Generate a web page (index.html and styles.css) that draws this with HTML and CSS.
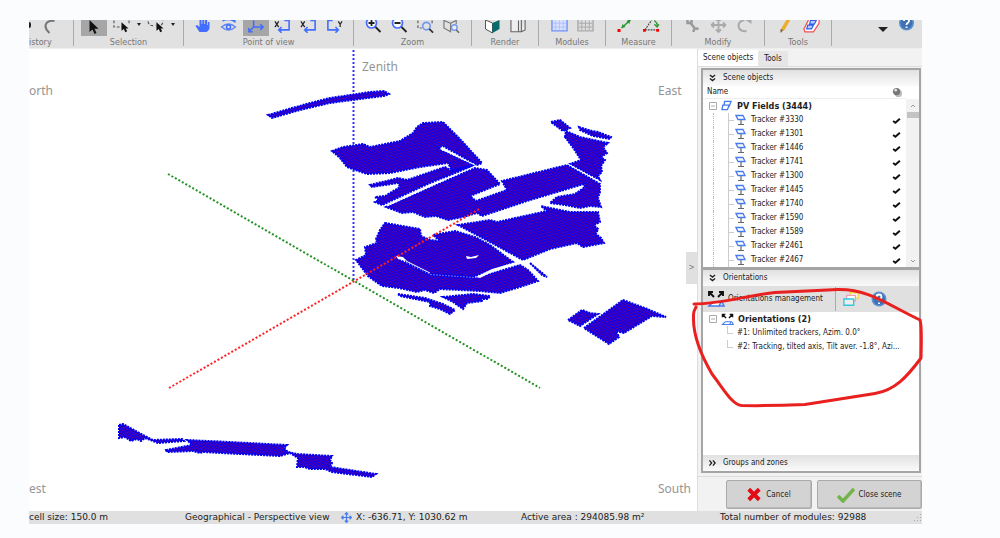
FILE: index.html
```html
<!DOCTYPE html>
<html lang="en">
<head>
<meta charset="utf-8">
<title>Scene editor</title>
<link rel="stylesheet" href="styles.css">
</head>
<body>
<svg class="defs" aria-hidden="true">
  <symbol id="tracker" viewBox="0 0 12 12"><path d="M1 1.500h7l2 4H3z" fill="#fff" stroke="#477bed" stroke-width="1.300"/><path d="M6 6v4M3 10.500h6" stroke="#666" stroke-width="1.200"/></symbol>
  <symbol id="tick" viewBox="0 0 8 8"><path d="M1 4.500l2 1.500 4-3.500" fill="none" stroke="#111" stroke-width="1.800"/></symbol>
  <symbol id="minus" viewBox="0 0 8 8"><path d="M.5.5h7v7h-7zM2 4h4" fill="#fff" stroke="#aaa"/></symbol>
  <symbol id="down" viewBox="0 0 8 8"><path d="M1 .5l3 2.500 3-2.500M1 4.500l3 2.500 3-2.500" fill="none" stroke="#222" stroke-width="1.500"/></symbol>
  <symbol id="orient" viewBox="0 0 18 18"><path d="M6 12h8l-2 4H2z" fill="#fff" stroke="#477bed" stroke-width="1.500"/><path d="M12 16h5l-2-4" fill="none" stroke="#477bed" stroke-width="1.500"/><path d="M7 7L2 2M2 6V2h4M11 7l5-5M12 2h4v4" fill="none" stroke="#111" stroke-width="1.900"/></symbol>
  <symbol id="help" viewBox="0 0 16 16"><circle cx="8" cy="8" r="7.500" fill="#5d92cf"/><circle cx="8" cy="8" r="6" fill="#3e72b5"/><path d="M5.500 6q0-2.500 2.500-2.500T10.500 6q0 1.200-1.300 1.900Q8 8.500 8 10M8 11.500v1.500" fill="none" stroke="#fff" stroke-width="1.800"/></symbol>
  <symbol id="move" viewBox="0 0 16 16"><path d="M8 1v14M1 8h14M5.500 3.500L8 1l2.500 2.500M5.500 12.500L8 15l2.500-2.500M3.500 5.500L1 8l2.500 2.500M12.500 5.500L15 8l-2.500 2.500" fill="none" stroke="currentColor" stroke-width="1.800"/></symbol>
  <symbol id="cursor" viewBox="0 0 16 16"><path d="M4 0v12l3-2.500 2 4.500 2-1-2-4.200h4z" fill="#111"/></symbol>
</svg>
<div class="app">
  <header class="toolbar">
    <section class="group history"><div class="icons"><i class="undo-end"></i><button class="tool" aria-label="Redo"><svg viewBox="0 0 16 16"><path d="M9 13Q3 8 6 3q3-3 8-2" fill="none" stroke="#777" stroke-width="2"/></svg></button></div><span class="caption">istory</span></section>
    <section class="group selection"><div class="icons">
      <button class="tool active" aria-label="Select"><svg viewBox="0 0 16 16"><use href="#cursor"/></svg></button>
      <button class="tool" aria-label="Select rectangle"><svg viewBox="0 0 18 16"><path d="M1 0v7h9M17 0v5" fill="none" stroke="#555" stroke-width="1.200" stroke-dasharray="3 2"/><path d="M9 2v9l2.500-2 1.500 3.500 2-1-1.500-3h3z" fill="#111"/></svg></button>
      <i class="caret"></i>
      <button class="tool" aria-label="Select lasso"><svg viewBox="0 0 18 16"><path d="M1 1q1 6 8 4M15 5q2-2 2-5" fill="none" stroke="#555" stroke-width="1.200" stroke-dasharray="3 2"/><path d="M10 2v9l2.500-2 1.500 3.500 2-1-1.500-3h3z" fill="#111"/></svg></button>
      <i class="caret"></i></div><span class="caption">Selection</span></section>
    <section class="group view"><div class="icons">
      <button class="tool" aria-label="Pan"><svg viewBox="0 0 16 16"><path d="M5 12L1 6l1.500-1L5 7V-1h2v5h.8V-2h2v6h.8V-1h2v6h.7V2H15v6q-1 4-4 4z" fill="#426dff"/></svg></button>
      <button class="tool" aria-label="Orbit"><svg viewBox="0 0 16 16"><path d="M1 7q7-6 14 0-7 6-14 0z" fill="none" stroke="#5c86f5" stroke-width="1.300"/><circle cx="8" cy="7" r="2" fill="none" stroke="#426dff" stroke-width="1.500"/><path d="M2 1q5-3 12 0" fill="none" stroke="#426dff" stroke-width="1.300"/><path d="M10 0h5v3z" fill="#426dff"/></svg></button>
      <button class="tool active" aria-label="Perspective"><svg viewBox="0 0 18 16"><path d="M7 0v7h10M14 4l3 3-3 3M7 7l-5 5M2 8v4h4" fill="none" stroke="#426dff" stroke-width="1.700"/></svg></button>
      <button class="tool" aria-label="Front view"><svg viewBox="0 0 18 16"><path d="M1 1l4 6M5 1L1 7" stroke="#222" stroke-width="1.300"/><path d="M11 0h5v10H5M8 7l-3 3 3 3" fill="none" stroke="#426dff" stroke-width="1.700"/></svg></button>
      <button class="tool" aria-label="Side view"><svg viewBox="0 0 18 16"><path d="M1 1l4 6M5 1L1 7" stroke="#222" stroke-width="1.300"/><path d="M11 0h5v10H5M8 7l-3 3 3 3" fill="none" stroke="#426dff" stroke-width="1.700"/></svg></button>
      <button class="tool" aria-label="Top view"><svg viewBox="0 0 18 16"><path d="M13 1l2 3 2-3M15 4v3" fill="none" stroke="#222" stroke-width="1.300"/><path d="M7 0H2v10h11M10 7l3 3-3 3" fill="none" stroke="#426dff" stroke-width="1.700"/></svg></button>
    </div><span class="caption">Point of view</span></section>
    <section class="group zoom"><div class="icons">
      <button class="tool" aria-label="Zoom in"><svg viewBox="0 0 16 16"><circle cx="6" cy="3" r="5" fill="#fff" stroke="#426dff" stroke-width="1.700"/><path d="M3 3h6M6 0v6M10 7l5 5" stroke="#222" stroke-width="1.800"/></svg></button>
      <button class="tool" aria-label="Zoom out"><svg viewBox="0 0 16 16"><circle cx="6" cy="3" r="5" fill="#fff" stroke="#426dff" stroke-width="1.700"/><path d="M3 3h6M10 7l5 5" stroke="#222" stroke-width="1.800"/></svg></button>
      <button class="tool" aria-label="Zoom window"><svg viewBox="0 0 18 16"><path d="M1 0v8h4M16 0v5" fill="none" stroke="#555" stroke-width="1.200" stroke-dasharray="3 2"/><circle cx="10" cy="6" r="4" fill="none" stroke="#7296f2" stroke-width="1.700"/><path d="M13 9l4 4" stroke="#333" stroke-width="1.800"/></svg></button>
      <button class="tool" aria-label="Zoom all"><svg viewBox="0 0 18 16"><path d="M1 0l7 3v9l-7-4zM8 3l6-3v4" fill="none" stroke="#777" stroke-width="1.200"/><circle cx="12" cy="7.500" r="3" fill="#eee" stroke="#7296f2" stroke-width="1.500"/><path d="M14 10l3 3" stroke="#666" stroke-width="1.500"/></svg></button>
    </div><span class="caption">Zoom</span></section>
    <section class="group render"><div class="icons">
      <button class="tool" aria-label="Shaded"><svg viewBox="0 0 16 16"><path d="M1 0l7 3v10l-7-4z" fill="#fff" stroke="#555"/><path d="M8 3l7-3v9l-7 4z" fill="#086b6b"/></svg></button>
      <button class="tool" aria-label="Wireframe"><svg viewBox="0 0 18 16"><path d="M1-1v13h11V-1M12 12l4-2V-1M9 0v12" fill="#eee" stroke="#666" stroke-width="1.200"/></svg></button>
    </div><span class="caption">Render</span></section>
    <section class="group modules"><div class="icons">
      <button class="tool" aria-label="Modules"><svg viewBox="0 0 18 16"><path d="M1-2h16v13H1z" fill="#d8e1ff" stroke="#6f92ff" stroke-width="1.500"/><path d="M5 0v10M9 0v10M13 0v10M2 3h14M2 7h14" stroke="#afc2ff"/></svg></button>
      <button class="tool" aria-label="Strings"><svg viewBox="0 0 18 16"><path d="M1-2h16v13H1z" fill="#ddd" stroke="#aaa" stroke-width="1.500"/><path d="M5 0v10M9 0v10M13 0v10M2 3h14M2 7h14" stroke="#aaa"/></svg></button>
    </div><span class="caption">Modules</span></section>
    <section class="group measure"><div class="icons">
      <button class="tool" aria-label="Distance"><svg viewBox="0 0 16 16"><path d="M4 8l9-8" fill="none" stroke="#2a972f" stroke-width="1.500"/><path d="M4 8l1-4 3 3zM13-1l-1 5-3-3z" fill="#2a972f"/><path d="M0 9h3v3H0z" fill="red"/></svg></button>
      <button class="tool" aria-label="Angle"><svg viewBox="0 0 18 16"><path d="M2 10L9 0M2 10h13" stroke="#444" stroke-width="1.200" stroke-dasharray="2 1"/><path d="M12 0q4 3 3 7M12 4l3 3 2-3" fill="none" stroke="#2a972f" stroke-width="1.300"/><path d="M0 9h3v3H0zM14 9h3v3h-3z" fill="red"/></svg></button>
    </div><span class="caption">Measure</span></section>
    <section class="group modify"><div class="icons">
      <button class="tool" aria-label="Settings"><svg viewBox="0 0 16 16"><path d="M3 0v3h4V0M6 3l4 5M9 12q0-5 5-3" fill="none" stroke="#999" stroke-width="2.500"/></svg></button>
      <button class="tool muted" aria-label="Move"><svg viewBox="0 3 16 16"><use href="#move" width="16" height="16"/></svg></button>
      <button class="tool" aria-label="Rotate"><svg viewBox="0 0 16 16"><path d="M10 11Q3 12 2 6q0-5 6-6" fill="none" stroke="#aaa" stroke-width="2"/><path d="M9 0h6v4z" fill="#aaa"/></svg></button>
    </div><span class="caption">Modify</span></section>
    <section class="group tools"><div class="icons">
      <button class="tool" aria-label="Edit"><svg viewBox="0 0 16 16"><path d="M4 8l6-10h4L7 10l-4 2z" fill="#edae2e"/><path d="M3 9l3 1-3 3z" fill="#765"/></svg></button>
      <button class="tool" aria-label="Zones"><svg viewBox="0 0 18 16"><path d="M6-1L1 9l1 3h9l6-9v-4z" fill="#fff" stroke="#f15050" stroke-width="1.300"/><path d="M8 0h6l-2 4H7zM5 5h6l-2 4H4z" fill="#b9cbff" stroke="#315ee3" stroke-width="1.300"/></svg></button>
    </div><span class="caption">Tools</span></section>
    <div class="toolbar-end"><i class="caret large"></i><button class="tool" aria-label="Help"><svg viewBox="0 5 16 16"><use href="#help" width="16" height="16"/></svg></button></div>
  </header>

  <div class="workspace">
    <main class="viewport">
      <svg class="scene" viewBox="29 49 668 462" preserveAspectRatio="xMidYMid meet" role="img" aria-label="Perspective view of the fields">
        <defs><pattern id="rows" width="4" height="3" patternUnits="userSpaceOnUse" patternTransform="rotate(-12)"><path d="M0 0h4v3H0z" fill="#0800f4"/><path d="M0 1h2M2 2.500h2" stroke="#780078" stroke-width="1"/></pattern></defs>
        <path class="axis up" d="M353.500 50V281"/>
        <path class="axis green" d="M168 174L540 388"/>
        <g class="field">
          <path d="M268 115L285 110 310 103 330 98 350 95 370 92 384 91 389 94 384 96 360 99 330 103 300 110 272 118z"/>
          <path d="M332 151L343 147 363 144 370 147 400 141 413 133 417 127 423 123 443 122 460 139 482 163 477 165 443 146 439 147 440 150 445 152 473 165 452 171 448 163 420 167 390 173 367 174 347 167 340 158z"/>
          <path d="M370 185L398 178 407 180 445 167 452 171 473 166 430 183 382 205 375 202 379 200 375 197 385 196 400 187 398 183 372 187z"/>
          <path d="M386 207L475 168 487 170 500 184 470 196 476 201 507 190 502 181 567 165 600 184 600 192 598 198 601 207 590 206 580 208 565 205 550 203 557 197 575 194 585 187 584 184 527 201 482 216 477 213 463 217 448 220 436 216 425 217 413 212 402 213z"/>
          <path d="M565 137L566 131 580 137 608 143 603 147 607 153 601 157 605 160 601 166 602 172 598 176 600 180 570 164 581 160 574 149z"/>
          <path d="M551 122L560 120 570 128 563 131zM579 127L592 131 598 132 611 137 610 139 593 136 580 130z"/>
          <path d="M458 225L490 220 497 222 547 211 541 206 555 209 570 212 598 212 600 222 594 225 598 229 596 234 601 238 604 243 583 247 577 243 550 249 523 260 490 242z"/>
          <path d="M385 223L420 229 421 236 430 240 440 241 433 235 455 231 475 237 490 245 513 262 498 268 490 270 473 277 430 274 407 262 404 258 397 257 398 259 430 275 476 278 520 265 528 270 538 281 520 287 500 293 480 291 460 290 440 289 434 293 425 290 417 292 399 288 382 286 368 276 356 260 366 255 365 247 377 243 376 239 380 230z"/>
          <path d="M398 294L425 298 431 300 443 304 455 310 450 314 440 309 430 306 430 302 400 296zM443 297L473 294 490 296 488 299 477 299 483 301 467 303 463 309 453 302z"/>
          <path d="M530 263L547 277 542 275zM568 320L582 310 590 313 598 314 580 326zM584 328L623 300 645 308 666 317 652 316 624 333 616 331 619 337 609 344z"/>
          <path d="M119 425L123 424 145 436 153 440 182 439 184 441 158 443 145 438 141 441 137 439 131 441 125 437 119 438z"/>
          <path d="M166 450L192 445 187 440 230 442 287 445 284 448 288 452 297 454 332 456 330 460 332 463 330 467 376 474 372 477 332 472 325 469 310 469 304 467 297 467 298 458 290 453 280 456 240 454 203 452 200 453 193 451 167 452z"/>
        </g>
        <path class="gap" d="M396 256l7 1 4 4-9-2zM466 256l5 1 8-2-3 3-9 1zM476 277L492 269 513 263 510 266 490 273 480 278z"/>
        <path class="lane" d="M406 261L430 273M568 164L600 182M387 206L475 166M441 149L475 165"/>
        <path class="axis red" d="M169 388L481 208"/>
        <g class="compass"><text x="362" y="71">Zenith</text><text x="29" y="95">orth</text><text x="658" y="95">East</text><text x="29" y="493">est</text><text x="658" y="493">South</text></g>
      </svg>
      <button class="collapse" aria-label="Collapse panel">&gt;</button>
    </main>

    <aside class="sidebar">
      <nav class="tabs"><button class="tab selected">Scene objects</button><button class="tab">Tools</button></nav>
      <div class="panels">
        <section class="panel">
          <h2 class="panel-title"><svg><use href="#down"/></svg>Scene objects</h2>
          <div class="list">
            <table class="objects">
              <thead><tr><th>Name</th><th class="mark"><svg viewBox="0 0 12 12"><circle cx="7" cy="7" r="4" fill="#bbb"/><circle cx="5" cy="5" r="4" fill="#777"/><circle cx="4" cy="3.500" r="1.500" fill="#ddd"/></svg></th></tr></thead>
              <tbody>
                <tr><td><span class="root"><svg class="toggle"><use href="#minus"/></svg><svg class="fields" viewBox="0 0 12 12"><path d="M4 1h7L9 6H3z" fill="#fff" stroke="#477bed" stroke-width="1.400"/><path d="M2 5h7l-2 5H1z" fill="#fff" stroke="#477bed" stroke-width="1.400"/></svg>PV Fields (3444)</span></td><td></td></tr>
                <tr><td><span class="leaf"><svg><use href="#tracker"/></svg>Tracker #3330</span></td><td class="mark"><svg><use href="#tick"/></svg></td></tr>
                <tr><td><span class="leaf"><svg><use href="#tracker"/></svg>Tracker #1301</span></td><td class="mark"><svg><use href="#tick"/></svg></td></tr>
                <tr><td><span class="leaf"><svg><use href="#tracker"/></svg>Tracker #1446</span></td><td class="mark"><svg><use href="#tick"/></svg></td></tr>
                <tr><td><span class="leaf"><svg><use href="#tracker"/></svg>Tracker #1741</span></td><td class="mark"><svg><use href="#tick"/></svg></td></tr>
                <tr><td><span class="leaf"><svg><use href="#tracker"/></svg>Tracker #1300</span></td><td class="mark"><svg><use href="#tick"/></svg></td></tr>
                <tr><td><span class="leaf"><svg><use href="#tracker"/></svg>Tracker #1445</span></td><td class="mark"><svg><use href="#tick"/></svg></td></tr>
                <tr><td><span class="leaf"><svg><use href="#tracker"/></svg>Tracker #1740</span></td><td class="mark"><svg><use href="#tick"/></svg></td></tr>
                <tr><td><span class="leaf"><svg><use href="#tracker"/></svg>Tracker #1590</span></td><td class="mark"><svg><use href="#tick"/></svg></td></tr>
                <tr><td><span class="leaf"><svg><use href="#tracker"/></svg>Tracker #1589</span></td><td class="mark"><svg><use href="#tick"/></svg></td></tr>
                <tr><td><span class="leaf"><svg><use href="#tracker"/></svg>Tracker #2461</span></td><td class="mark"><svg><use href="#tick"/></svg></td></tr>
                <tr><td><span class="leaf"><svg><use href="#tracker"/></svg>Tracker #2467</span></td><td class="mark"><svg><use href="#tick"/></svg></td></tr>
              </tbody>
            </table>
            <div class="scrollbar"><svg viewBox="0 0 8 8"><path d="M2 5l2-2 2 2" fill="none" stroke="#999"/></svg><i class="thumb"></i><svg class="last" viewBox="0 0 8 8"><path d="M2 3l2 2 2-2" fill="none" stroke="#999"/></svg></div>
          </div>
        </section>
        <section class="panel grow">
          <h2 class="panel-title"><svg><use href="#down"/></svg>Orientations</h2>
          <div class="orient-bar"><button class="manage"><svg><use href="#orient"/></svg>Orientations management</button><button class="orient-tool" aria-label="Arrange"><svg viewBox="0 0 18 16"><path d="M8 1h9v6H8z" fill="#fff" stroke="#f4d63a" stroke-width="1.500"/><path d="M4 4h10v6H4z" fill="#fff" stroke="#f3a0b4" stroke-width="1.500"/><path d="M1 8h11v7H1z" fill="#eee" stroke="#2ec9dc" stroke-width="1.500"/></svg></button><button class="orient-tool" aria-label="Orientation help"><svg><use href="#help"/></svg></button></div>
          <ul class="orientations">
            <li class="root"><svg class="toggle"><use href="#minus"/></svg><svg class="orient-icon"><use href="#orient"/></svg>Orientations (2)</li>
            <li class="item">#1: Unlimited trackers, Azim. 0.0°</li>
            <li class="item">#2: Tracking, tilted axis, Tilt aver. -1.8°, Azi...</li>
          </ul>
          <h2 class="panel-title"><svg class="closed"><use href="#down"/></svg>Groups and zones</h2>
        </section>
      </div>
      <div class="actions">
        <button class="action"><svg viewBox="0 0 16 16"><path d="M2 2l12 12M14 2L2 14" stroke="#e30b13" stroke-width="4.500"/></svg>Cancel</button>
        <button class="action wide"><svg class="check" viewBox="0 0 18 16"><path d="M1 9l5 5L17 2" fill="none" stroke="#75b34b" stroke-width="3.500"/></svg>Close scene</button>
      </div>
      <svg class="annotation" viewBox="690 285 236 124" aria-hidden="true"><path d="M694 304C722 304 748 295 775 292.500Q805 291 838 289.500C869 289 888 305 920 320Q922 325 921 358C907 377 895 390 875 393.500Q847 398 805 404.500 770 406 742 405.500C732 405 723 388 712 374 698 350 693 333 693.500 317Q693 312 696 307"/></svg>
    </aside>
  </div>
  <footer class="status"><span class="cell first">cell size: 150.0 m</span><span class="cell mode">Geographical - Perspective view</span><span class="cell position"><svg><use href="#move"/></svg>X: -636.71, Y: 1030.62 m</span><span class="cell area">Active area : 294085.98 m²</span><span class="cell total">Total number of modules: 92988</span><svg class="grip" viewBox="0 0 8 8"><path d="M6 0h1v1H6zM3 3h1v1H3zM6 3h1v1H6zM0 6h1v1H0zM3 6h1v1H3zM6 6h1v1H6z" fill="#aaa"/></svg></footer>
</div>
</body>
</html>
```
FILE: styles.css
```css
* { box-sizing: border-box; }
body {
  margin: 0;
  min-height: 100vh;
  padding: 20px 78px 14px 29px;
  display: flex;
  background: #fbfcfd;
  color: #222;
  font: 8px/14px "DejaVu Sans Condensed", "Noto Sans", sans-serif;
}
button { font: inherit; color: inherit; border: 0; padding: 0; background: none; }
h2, ul { margin: 0; padding: 0; font: inherit; list-style: none; }
svg { display: block; flex: none; }
.defs { position: absolute; width: 0; height: 0; }
.app { flex: 1; min-width: 0; display: flex; flex-direction: column; background: #fff; }

.toolbar { display: flex; height: 29px; background: #e1e1e1; border-bottom: 1px solid #eee; overflow: hidden; }
.group { display: flex; flex-direction: column; align-items: center; border-right: 1px solid #aaa; margin-bottom: 2px; }
.icons { display: flex; height: 16px; gap: 2px; justify-content: center; }
.tool { width: 24px; height: 16px; display: flex; justify-content: center; overflow: hidden; }
.tool svg { width: 17px; height: 16px; }
.tool.active { width: 26px; background: #a6a6a6; }
.muted { color: #aaa; }
.caption { color: #777; font-size: 9px; line-height: 13px; }
.caret { margin-top: 3px; height: 0; border: 2px solid transparent; border-top: 3px solid #222; border-bottom: 0; }
.caret.large { margin-top: 7px; border-width: 5px 5px 0; }
.history { width: 45px; align-items: flex-start; }
.undo-end { width: 2px; height: 6px; margin-top: 2px; background: #222; border-radius: 0 2px 2px 0; }
.history .icons { gap: 5px; }
.selection { width: 110px; }
.selection .icons { gap: 3px; padding-right: 2px; }
.view { width: 170px; }
.zoom { width: 118px; }
.render, .modules { width: 67px; }
.measure { width: 66px; }
.modify { width: 93px; }
.tools { width: 67px; }
.toolbar-end { flex: 1; display: flex; justify-content: flex-end; gap: 6px; padding-right: 4px; }

.workspace { flex: 1; display: flex; min-height: 0; }
.viewport { flex: 1; min-width: 0; position: relative; display: flex; background: #fff; }
.scene { width: 100%; height: 100%; }
.axis { fill: none; stroke-width: 2; stroke-dasharray: 2 2; }
.up { stroke: #3333ff; }
.green { stroke: #229322; }
.red { stroke: #ff2020; }
.field path { fill: url(#rows); stroke: #0000f0; stroke-width: 2; stroke-dasharray: 2 1; }
.gap { fill: #fff; }
.lane { fill: none; stroke: #fff; stroke-width: 1; }
.compass { fill: #959595; font: 12px "Noto Sans", sans-serif; }
.collapse { position: absolute; right: 0; top: 203px; width: 11px; height: 32px; background: #e0e0e0; color: #777; }

.sidebar { width: 225px; flex: none; position: relative; display: flex; flex-direction: column; background: #f2f2f2; border-left: 1px solid #ddd; }
.tabs { display: flex; align-items: flex-end; height: 18px; border-bottom: 1px solid #ddd; }
.tab { height: 15px; padding: 0 6px; background: #e6e6e6; }
.tab.selected { height: 16px; padding: 0 5px; background: #fff; }
.panels { flex: 1; display: flex; flex-direction: column; margin: 1px 1px 3px 3px; border: 2px solid #a5a5a5; background: #fff; }
.panel { display: flex; flex-direction: column; }
.panel.grow { flex: 1; border-top: 3px solid #a5a5a5; }
.panel-title { display: flex; align-items: center; gap: 7px; height: 16px; padding-left: 6px; background: linear-gradient(#e1e1e1, #fafafa); }
.panel-title svg { width: 7px; height: 8px; }
.panel-title .closed { transform: rotate(-90deg); }
.list { display: flex; }
.objects { flex: 1; border-collapse: collapse; }
.objects td { padding: 0; height: 14px; text-align: left; }
.objects th { padding: 0 0 0 4px; height: 12px; line-height: 12px; text-align: left; font-weight: 400; border-bottom: 1px solid #eee; }
.objects .mark { width: 18px; padding-left: 4px; }
.mark svg { width: 9px; height: 9px; }
th.mark svg { width: 11px; height: 11px; }
.root { display: flex; align-items: center; gap: 4px; padding-left: 6px; font-weight: 700; font-size: 9px; }
.toggle { width: 8px; height: 8px; }
.fields { width: 11px; height: 12px; margin-right: 1px; }
.leaf { display: flex; align-items: center; gap: 4px; height: 14px; margin-left: 10px; border-left: 1px dotted #bbb; padding-left: 21px; background: linear-gradient(90deg, #ccc, #ccc) 14px 7px / 6px 1px no-repeat, linear-gradient(90deg, #ccc, #ccc) 14px 0 / 1px 14px no-repeat; }
.leaf svg { width: 12px; height: 12px; }
.scrollbar { width: 13px; display: flex; flex-direction: column; align-items: center; padding-top: 16px; background: linear-gradient(#fff 13px, #f2f2f2 13px); }
.scrollbar svg { width: 8px; height: 8px; }
.scrollbar .last { margin: auto 0 2px; }
.thumb { width: 12px; height: 6px; margin-top: 2px; background: #c3c3c3; }
.orient-bar { height: 26px; display: flex; align-items: center; background: #e0e0e0; }
.manage { display: flex; align-items: center; gap: 3px; width: 133px; height: 24px; padding-left: 4px; border-right: 1px solid #aaa; }
.manage svg { width: 18px; height: 18px; }
.orient-tool { width: 27px; display: flex; justify-content: center; margin-left: 1px; }
.orient-tool svg { width: 16px; height: 16px; }
.orientations { flex: 1; }
.orientations .root { height: 14px; }
.orient-icon { width: 13px; height: 13px; }
.item { margin-left: 24px; padding-left: 10px; height: 14px; white-space: nowrap; background: linear-gradient(90deg, #ccc, #ccc) 0 7px / 6px 1px no-repeat, linear-gradient(90deg, #ccc, #ccc) 0 0 / 1px 8px no-repeat; }
.actions { display: flex; justify-content: flex-end; gap: 5px; padding: 3px 0 2px; border-top: 1px solid #ddd; }
.action { width: 86px; height: 29px; display: flex; align-items: center; justify-content: center; gap: 5px; background: #d3d3d3; border: 1px solid #aaa; border-radius: 2px; box-shadow: inset -1px -1px #bbb; }
.action.wide { width: 105px; gap: 3px; }
.action svg { width: 14px; height: 15px; }
.action .check { width: 18px; height: 16px; }
.annotation { position: absolute; left: -8px; top: 236px; width: 236px; height: 124px; pointer-events: none; }
.annotation path { fill: none; stroke: #e92020; stroke-width: 3; stroke-linecap: round; }

.status { display: flex; align-items: center; height: 13px; background: #e0e0e0; font: 9px/13px "DejaVu Sans", sans-serif; }
.cell { display: flex; align-items: center; gap: 4px; white-space: nowrap; }
.first { width: 156px; }
.mode { width: 156px; }
.position { width: 180px; }
.position svg { width: 11px; height: 11px; color: #477bed; }
.area { width: 199px; }
.grip { width: 8px; height: 8px; margin-left: auto; }
```
